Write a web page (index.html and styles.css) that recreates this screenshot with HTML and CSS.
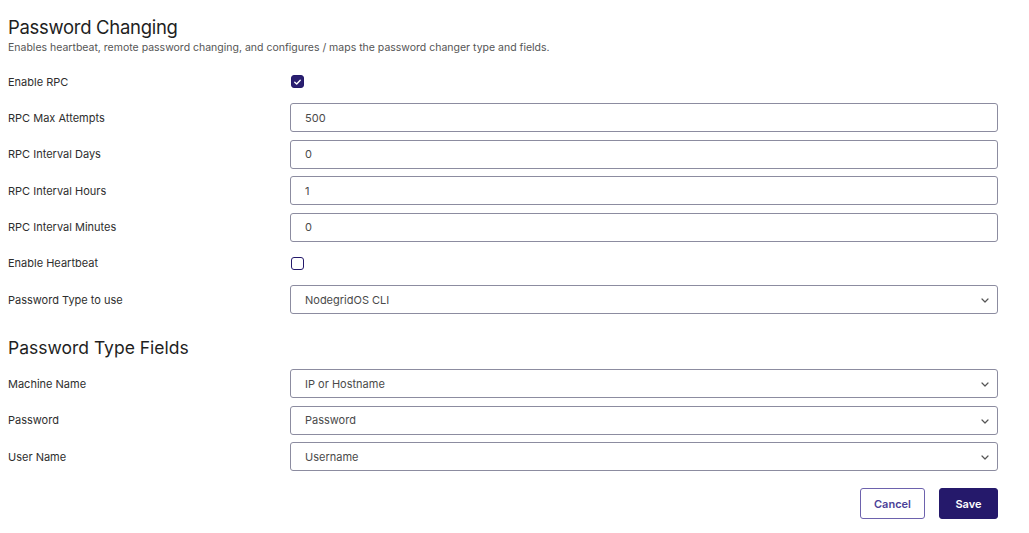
FILE: index.html
```html
<!DOCTYPE html>
<html>
<head>
<meta charset="utf-8">
<link rel="stylesheet" href="styles.css">
</head>
<body>
<div class="page">
  <h1 class="title">Password Changing</h1>
  <p class="subtitle">Enables heartbeat, remote password changing, and configures / maps the password changer type and fields.</p>

  <div class="form">
    <div class="row">
      <div class="label">Enable RPC</div>
      <div class="control"><span class="check checked"><svg viewBox="0 0 12 12" width="12" height="12"><path d="M3 6.2 L5.1 8.2 L9 4" fill="none" stroke="#fff" stroke-width="1.5" stroke-linecap="round" stroke-linejoin="round"/></svg></span></div>
    </div>
    <div class="row">
      <div class="label">RPC Max Attempts</div>
      <div class="control"><div class="input">500</div></div>
    </div>
    <div class="row">
      <div class="label">RPC Interval Days</div>
      <div class="control"><div class="input">0</div></div>
    </div>
    <div class="row">
      <div class="label">RPC Interval Hours</div>
      <div class="control"><div class="input">1</div></div>
    </div>
    <div class="row">
      <div class="label">RPC Interval Minutes</div>
      <div class="control"><div class="input">0</div></div>
    </div>
    <div class="row">
      <div class="label">Enable Heartbeat</div>
      <div class="control"><span class="check"></span></div>
    </div>
    <div class="row">
      <div class="label">Password Type to use</div>
      <div class="control"><div class="input select">NodegridOS CLI<svg class="chev" viewBox="0 0 8 5" width="8" height="5"><path d="M1 1 L4 4 L7 1" fill="none" stroke="#555" stroke-width="1.2" stroke-linecap="round" stroke-linejoin="round"/></svg></div></div>
    </div>
  </div>

  <h2 class="section">Password Type Fields</h2>

  <div class="form">
    <div class="row">
      <div class="label">Machine Name</div>
      <div class="control"><div class="input select">IP or Hostname<svg class="chev" viewBox="0 0 8 5" width="8" height="5"><path d="M1 1 L4 4 L7 1" fill="none" stroke="#555" stroke-width="1.2" stroke-linecap="round" stroke-linejoin="round"/></svg></div></div>
    </div>
    <div class="row">
      <div class="label">Password</div>
      <div class="control"><div class="input select">Password<svg class="chev" viewBox="0 0 8 5" width="8" height="5"><path d="M1 1 L4 4 L7 1" fill="none" stroke="#555" stroke-width="1.2" stroke-linecap="round" stroke-linejoin="round"/></svg></div></div>
    </div>
    <div class="row">
      <div class="label">User Name</div>
      <div class="control"><div class="input select">Username<svg class="chev" viewBox="0 0 8 5" width="8" height="5"><path d="M1 1 L4 4 L7 1" fill="none" stroke="#555" stroke-width="1.2" stroke-linecap="round" stroke-linejoin="round"/></svg></div></div>
    </div>
  </div>

  <div class="actions">
    <button class="btn cancel">Cancel</button>
    <button class="btn save">Save</button>
  </div>
</div>
</body>
</html>
```

FILE: styles.css
```css
* { box-sizing: border-box; }
html, body { margin: 0; padding: 0; background: #fff; }
body {
  font-family: Inter, "Noto Sans", "Liberation Sans", sans-serif;
  color: #2e2e2e;
}
.page {
  padding: 14px 31px 0 8px;
}
.title {
  margin: 0;
  font-size: 18.5px;
  font-weight: 400;
  line-height: 27px;
  color: #1f1f1f;
  letter-spacing: -0.3px;
}
.subtitle {
  margin: 0;
  font-size: 10.5px;
  line-height: 13px;
  color: #555;
}
.form {
  display: flex;
  flex-direction: column;
  gap: 7.4px;
}
.page > .form:first-of-type { margin-top: 13px; }
.row {
  display: grid;
  grid-template-columns: 282px 1fr;
  align-items: center;
  height: 29px;
}
.label {
  font-size: 11px;
  color: #2e2e2e;
}
.control {
  display: flex;
  align-items: center;
  height: 100%;
}
.check {
  display: inline-flex;
  align-items: center;
  justify-content: center;
  width: 13px;
  height: 13px;
  margin-left: 1px;
  border: 1.6px solid #24196b;
  border-radius: 3px;
  background: #fff;
}
.check.checked { background: #2a1f70; }
.input {
  position: relative;
  width: 100%;
  height: 29px;
  border: 1px solid #8c8ca0;
  border-radius: 3px;
  padding-left: 14px;
  display: flex;
  align-items: center;
  font-size: 11px;
  color: #4a4a4a;
}
.chev {
  position: absolute;
  right: 8px;
  top: 12px;
}
.section {
  margin: 23px 0 10px;
  font-size: 17.5px;
  font-weight: 400;
  line-height: 22px;
  color: #1f1f1f;
}
.actions {
  display: flex;
  justify-content: flex-end;
  gap: 14px;
  margin-top: 17px;
}
.btn {
  height: 31px;
  border-radius: 3px;
  font-family: Inter, "Noto Sans", "Liberation Sans", sans-serif;
  font-size: 11px;
  font-weight: 600;
  cursor: pointer;
}
.cancel {
  width: 65px;
  background: #fff;
  border: 1px solid #6d62ad;
  color: #4b3f98;
}
.save {
  width: 59px;
  background: #25196b;
  border: 1px solid #25196b;
  color: #fff;
}
```
